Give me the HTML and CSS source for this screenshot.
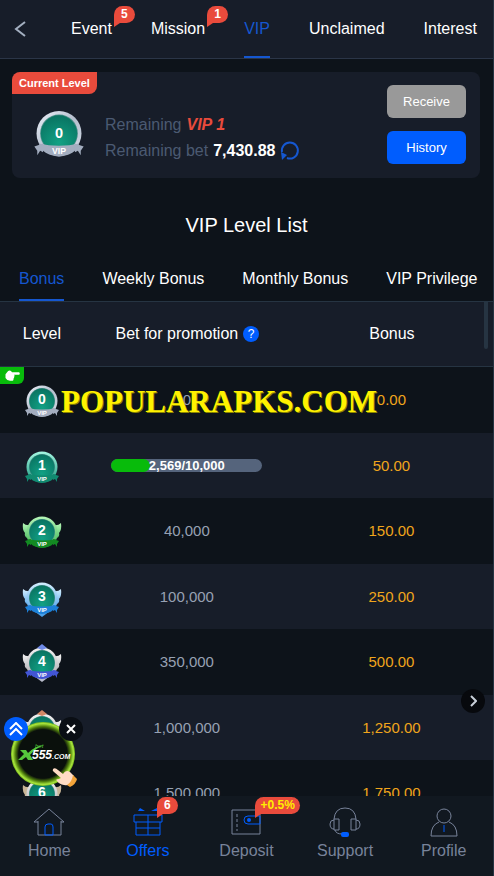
FILE: index.html
```html
<!DOCTYPE html>
<html lang="en">
<head>
  <meta charset="UTF-8" />
  <meta name="viewport" content="width=device-width, initial-scale=1.0" />
  <title>VIP</title>
  <link rel="stylesheet" href="styles.css">
</head>
<body>
  <!-- shared medal artwork -->
  <svg class="defs" width="0" height="0" aria-hidden="true">
    <defs>
      <linearGradient id="silver" x1="0" y1="0" x2="1" y2="1"><stop offset="0" stop-color="#eef2fa"/><stop offset=".5" stop-color="#b5bfce"/><stop offset="1" stop-color="#d5dbe6"/></linearGradient>
      <linearGradient id="mint" x1="0" y1="0" x2="0" y2="1"><stop offset="0" stop-color="#a5f8e2"/><stop offset="1" stop-color="#1c9a80"/></linearGradient>
      <linearGradient id="green" x1="0" y1="0" x2="0" y2="1"><stop offset="0" stop-color="#b6f7b8"/><stop offset="1" stop-color="#3db454"/></linearGradient>
      <linearGradient id="blue" x1="0" y1="0" x2="0" y2="1"><stop offset="0" stop-color="#d4efff"/><stop offset="1" stop-color="#4b9fe8"/></linearGradient>
      <linearGradient id="white" x1="0" y1="0" x2="0" y2="1"><stop offset="0" stop-color="#f4f4f4"/><stop offset="1" stop-color="#a9a9ae"/></linearGradient>
      <radialGradient id="gem" cx=".5" cy=".75" r=".8"><stop offset="0" stop-color="#12a184"/><stop offset="1" stop-color="#08705f"/></radialGradient>
      <radialGradient id="ring" cx=".5" cy=".5" r=".5"><stop offset=".76" stop-color="#0a100c"/><stop offset=".86" stop-color="#4f7d0d"/><stop offset=".95" stop-color="#a8e63c"/><stop offset="1" stop-color="#79b51e"/></radialGradient>
    </defs>
    <symbol id="disc" viewBox="0 0 40 40">
      <circle cx="20" cy="21" r="15.500"/>
      <circle cx="20" cy="21" r="13" fill="#4a8f88"/>
      <circle cx="20" cy="21" r="12.500" fill="url(#gem)"/>
    </symbol>
    <symbol id="ribbon" viewBox="0 0 40 40">
      <path d="M3 30 L9 28 V34 L7 33 L5 36 L5 33 Z M37 30 L31 28 V34 L33 33 L35 36 L35 33 Z"/>
      <path d="M6 28 Q20 31 34 28 L31 33 Q28 36 20 37 Q12 36 9 33 Z"/>
    </symbol>
    <symbol id="wings" viewBox="0 0 40 40">
      <path d="M1 12 Q4 15 9 14 L11 31 Q6 31 5 27 Q2 25 3 22 Q0 19 1 12 Z"/>
      <path d="M39 12 Q36 15 31 14 L29 31 Q34 31 35 27 Q38 25 37 22 Q40 19 39 12 Z"/>
    </symbol>
    <symbol id="hand" viewBox="0 0 24 20">
      <path d="M23 5 H12 Q10 1 6 3 L2 8 V14 Q4 18 9 18 H13 Q15 17 14 15 Q16 14 15 12 Q17 11 15 9 H23 Q25 7 23 5 Z"/>
    </symbol>
  </svg>

  <div class="app">
    <header class="topbar">
      <button class="back" aria-label="Back">
        <svg width="12" height="18" viewBox="0 0 12 18"><path d="M11 2 L2 9 L11 16"/></svg>
      </button>
      <nav class="tabs">
        <a href="#event">Event<span class="bubble">5</span></a>
        <a href="#mission">Mission<span class="bubble">1</span></a>
        <a href="#vip" class="active">VIP</a>
        <a href="#unclaimed">Unclaimed</a>
        <a href="#interest">Interest</a>
      </nav>
    </header>

    <main>
      <section class="card">
        <span class="ribbon-label">Current Level</span>
        <svg class="medal large" viewBox="0 0 40 40">
          <use href="#disc" fill="url(#silver)"/><use href="#ribbon" fill="#a3adbf"/>
          <text x="20" y="24" class="num">0</text><text x="20" y="35" class="vip">VIP</text>
        </svg>
        <div class="remaining">
          <p>Remaining <em>VIP 1</em></p>
          <p>Remaining bet <strong>7,430.88</strong>
            <button class="refresh" aria-label="Refresh">
              <svg width="20" height="20" viewBox="0 0 20 20"><path d="M2 11 A8 8 0 1 1 7 17"/><path class="tip" d="M1 11 L7 14 L2 19 Z"/></svg>
            </button>
          </p>
        </div>
        <div class="actions">
          <button class="btn muted">Receive</button>
          <button class="btn">History</button>
        </div>
      </section>

      <h1>VIP Level List</h1>

      <nav class="tabs level-tabs">
        <a href="#bonus" class="active">Bonus</a>
        <a href="#weekly">Weekly Bonus</a>
        <a href="#monthly">Monthly Bonus</a>
        <a href="#privilege">VIP Privilege</a>
      </nav>

      <div class="list">
        <table>
          <thead>
            <tr>
              <th class="level">Level</th>
              <th class="bet"><span>Bet for promotion <button class="help" aria-label="Help">?</button></span></th>
              <th>Bonus</th>
            </tr>
          </thead>
          <tbody>
            <tr>
              <td>
                <span class="pointer"><svg width="16" height="13"><use href="#hand"/></svg></span>
                <svg class="medal" viewBox="0 0 40 40">
                  <use href="#disc" fill="url(#silver)"/><use href="#ribbon" fill="#a3adbf"/>
                  <text x="20" y="24" class="num">0</text><text x="20" y="35" class="vip">VIP</text>
                </svg>
              </td>
              <td>0</td>
              <td>0.00</td>
            </tr>
            <tr>
              <td>
                <svg class="medal" viewBox="0 0 40 40">
                  <use href="#disc" fill="url(#mint)"/><use href="#ribbon" fill="#118a70"/>
                  <text x="20" y="24" class="num">1</text><text x="20" y="35" class="vip">VIP</text>
                </svg>
              </td>
              <td><div class="progress"><div class="fill" style="width: 25.69%"></div><span>2,569/10,000</span></div></td>
              <td>50.00</td>
            </tr>
            <tr>
              <td>
                <svg class="medal" viewBox="0 0 40 40">
                  <use href="#wings" fill="url(#green)"/><use href="#disc" fill="url(#green)"/><use href="#ribbon" fill="#138a22"/>
                  <text x="20" y="24" class="num">2</text><text x="20" y="35" class="vip">VIP</text>
                </svg>
              </td>
              <td>40,000</td>
              <td>150.00</td>
            </tr>
            <tr>
              <td>
                <svg class="medal" viewBox="0 0 40 40">
                  <path d="M12 34 L20 40 L28 34 Z" fill="#4b9fe8"/>
                  <use href="#wings" fill="url(#blue)"/><use href="#disc" fill="url(#blue)"/><use href="#ribbon" fill="#1d80d8"/>
                  <text x="20" y="24" class="num">3</text><text x="20" y="35" class="vip">VIP</text>
                </svg>
              </td>
              <td>100,000</td>
              <td>250.00</td>
            </tr>
            <tr>
              <td>
                <svg class="medal" viewBox="0 0 40 40">
                  <path d="M12 34 L20 40 L28 34 Z" fill="#b9bccb"/>
                  <use href="#wings" fill="url(#white)"/><use href="#disc" fill="url(#white)"/><use href="#ribbon" fill="#4255d4"/>
                  <path d="M15 6 L20 2 L25 6 L20 8 Z" fill="#6f8be8"/>
                  <text x="20" y="24" class="num">4</text><text x="20" y="35" class="vip">VIP</text>
                </svg>
              </td>
              <td>350,000</td>
              <td>500.00</td>
            </tr>
            <tr>
              <td>
                <svg class="medal" viewBox="0 0 40 40">
                  <use href="#wings" fill="url(#white)"/><use href="#disc" fill="url(#white)"/><use href="#ribbon" fill="#b0673c"/>
                  <path d="M15 6 L20 2 L25 6 L20 8 Z" fill="#d38866"/>
                </svg>
              </td>
              <td>1,000,000</td>
              <td>1,250.00</td>
            </tr>
            <tr>
              <td>
                <svg class="medal" viewBox="0 0 40 40">
                  <use href="#wings" fill="#c9b596"/><use href="#disc" fill="url(#white)"/><use href="#ribbon" fill="#b0673c"/>
                  <text x="20" y="24" class="num">6</text>
                </svg>
              </td>
              <td>1,500,000</td>
              <td>1,750.00</td>
            </tr>
          </tbody>
        </table>
        <div class="thumb"></div>
        <div class="watermark">POPULARAPKS.COM</div>
      </div>
    </main>

    <button class="next" aria-label="Next">
      <svg width="8" height="12" viewBox="0 0 8 12"><path d="M2 1 L7 6 L2 11"/></svg>
    </button>

    <div class="promo">
      <svg width="66" height="66" viewBox="0 0 66 66">
        <circle cx="33" cy="33" r="32" fill="url(#ring)"/>
        <path d="M10 29 H16 L18 32 Q25 25 34 24 Q26 27 20 34 L23 39 H18 L16 36 L12 39 H8 L14 33 Z" fill="#55c83c"/>
        <text x="22" y="38" class="brand">555<tspan class="dotcom">.COM</tspan></text>
        <text x="25" y="27" class="bet-word">bet</text>
      </svg>
      <svg class="tap" width="26" height="22" viewBox="0 0 26 22">
        <path d="M1 2 Q3 0 6 3 L11 7 Q14 2 18 5 L22 9 L21 16 Q17 19 12 18 Q7 17 5 14 Q3 12 7 12 L9 11 L2 5 Q0 4 1 2 Z" fill="#ffdcc4"/>
        <path d="M21 8 L25 12 Q24 17 18 20 L15 18 Q20 15 21 8 Z" fill="#f2a43a"/>
      </svg>
      <button class="dot expand" aria-label="Expand">
        <svg width="14" height="14" viewBox="0 0 14 14"><path d="M1 7 L7 1 L13 7 M1 13 L7 7 L13 13"/></svg>
      </button>
      <button class="dot close" aria-label="Close">
        <svg width="10" height="10" viewBox="0 0 10 10"><path d="M1 1 L9 9 M9 1 L1 9"/></svg>
      </button>
    </div>

    <nav class="bottombar">
      <a href="#home">
        <svg width="32" height="30" viewBox="0 0 32 30"><path d="M5 14 V28 H28 V14 M1 15 L16 2 L31 15 H28 M1 15 H5"/><path class="accent" d="M12 28 V20 Q12 17 15 17 H18 Q20 17 20 20 V28 Z"/></svg>
        Home
      </a>
      <a href="#offers" class="active">
        <svg width="32" height="30" viewBox="0 0 32 30"><path d="M2 8 H30 V15 H2 Z M4 15 V28 H28 V15 M4 21 H28 M16 8 V28"/><path class="solid" d="M6 4 L8 1 L13 4 Z M19 4 L25 1 V4 Z"/></svg>
        Offers
        <span class="bubble">6</span>
      </a>
      <a href="#deposit">
        <svg width="32" height="30" viewBox="0 0 32 30"><path d="M2 3 H30 V27 H2 Z"/><path d="M7 7 V24" stroke-dasharray="3 2"/><path class="accent" d="M30 9 H18 Q14 9 14 13 Q14 17 18 17 H30 Z"/><circle class="solid" cx="19" cy="13" r="2"/></svg>
        Deposit
        <span class="bubble wide">+0.5%</span>
      </a>
      <a href="#support">
        <svg width="32" height="30" viewBox="0 0 32 30"><path d="M5 12 Q6 1 16 1 Q26 1 27 12 M5 12 H10 V23 H5 Z M22 12 H27 V23 H22 Z M5 13 Q1 13 1 17 Q1 22 5 22 M27 13 Q31 13 31 17 Q31 22 27 22 M6 23 Q7 27 13 27"/><rect class="solid" x="12" y="25" width="8" height="5" rx="2"/></svg>
        Support
      </a>
      <a href="#profile">
        <svg width="32" height="30" viewBox="0 0 32 30"><circle cx="16" cy="9" r="7"/><path d="M11 15 Q3 18 3 29 H29 Q29 18 21 15"/><path class="accent" d="M16 18 V25"/></svg>
        Profile
      </a>
    </nav>
  </div>
</body>
</html>
```
FILE: styles.css
```css
:root {
  --background: #0d131a;
  --panel: #171d29;
  --line: #263442;
  --primary: #1557d0;
  --accent: #005dfe;
  --danger: #e94b3c;
  --muted: #4b5a72;
  --text: #ffffff;
}

* {
  box-sizing: border-box;
}

body {
  margin: 0;
  font-family: "Liberation Sans", Arial, sans-serif;
  font-size: 16px;
  color: var(--text);
  background: var(--background);
}

a {
  color: inherit;
  text-decoration: none;
}

button {
  padding: 0;
  border: 0;
  font-family: inherit;
  color: inherit;
  background: none;
  cursor: pointer;
}

svg {
  display: block;
  fill: none;
}

.defs {
  position: absolute;
}

.app {
  position: relative;
  display: flex;
  flex-direction: column;
  height: 100vh;
  overflow: hidden;
  border-right: 1px solid var(--line);
}

/* top bar */
.topbar {
  display: flex;
  flex: none;
  height: 59px;
  background: var(--panel);
  border-bottom: 1px solid #2b3547;
}

.back {
  width: 71px;
  padding-left: 14px;
}

.back svg {
  stroke: #a3afc0;
  stroke-width: 2;
}

.tabs {
  display: flex;
  gap: 39px;
  white-space: nowrap;
}

.tabs a {
  position: relative;
  display: flex;
  align-items: center;
}

.tabs .active {
  color: var(--primary);
}

.tabs .active::after {
  content: "";
  position: absolute;
  left: 0;
  right: 0;
  bottom: 0;
  height: 2px;
  background: var(--primary);
}

.bubble {
  position: absolute;
  left: 100%;
  top: 6px;
  min-width: 21px;
  height: 17px;
  margin-left: 2px;
  padding: 0 5px;
  border-radius: 9px 9px 9px 0;
  font-size: 12px;
  font-weight: bold;
  line-height: 17px;
  text-align: center;
  background: var(--danger);
}

.bubble::after {
  content: "";
  position: absolute;
  left: 0;
  top: 100%;
  border-top: 4px solid var(--danger);
  border-right: 6px solid transparent;
}

/* level card */
main {
  flex: 1;
  display: flex;
  flex-direction: column;
  min-height: 0;
  overflow: hidden;
}

.card {
  position: relative;
  display: flex;
  align-items: center;
  flex: none;
  height: 106px;
  margin: 13px 13px 0 12px;
  padding: 0 14px 0 18px;
  border-radius: 8px;
  background: var(--panel);
}

.ribbon-label {
  position: absolute;
  left: 0;
  top: 0;
  padding: 0 7px;
  border-radius: 8px 0;
  font-size: 11px;
  font-weight: bold;
  line-height: 22px;
  background: var(--danger);
}

.remaining {
  flex: 1;
  margin-left: 17px;
  padding-top: 26px;
  color: var(--muted);
}

.remaining p {
  display: flex;
  align-items: center;
  gap: 5px;
  margin: 0;
  line-height: 26px;
  white-space: nowrap;
}

.remaining em {
  font-weight: bold;
  color: var(--danger);
}

.remaining strong {
  color: var(--text);
}

.refresh svg {
  stroke: var(--primary);
  stroke-width: 2;
}

.refresh .tip {
  fill: var(--primary);
  stroke: none;
}

.actions {
  display: flex;
  flex-direction: column;
  gap: 13px;
  padding-bottom: 2px;
}

.btn {
  width: 79px;
  height: 33px;
  border-radius: 6px;
  font-size: 13px;
  background: var(--accent);
}

.btn.muted {
  background: #999999;
}

h1 {
  margin: 34px 0 20px;
  font-size: 20px;
  font-weight: normal;
  line-height: 26px;
  text-align: center;
}

.level-tabs {
  flex: none;
  gap: 38px;
  height: 44px;
  padding: 0 19px;
  border-bottom: 1px solid var(--line);
}

.level-tabs a {
  padding-bottom: 2px;
}

/* level table */
.list {
  position: relative;
  flex: 1;
  min-height: 0;
  overflow: hidden;
}

table {
  width: 100%;
  border-collapse: separate;
  border-spacing: 0;
  table-layout: fixed;
}

th {
  height: 65px;
  padding: 0;
  font-weight: normal;
  background: var(--panel);
  border-bottom: 1px solid var(--line);
}

th.level {
  width: 17%;
}

th.bet {
  width: 42%;
}

th.bet span {
  display: flex;
  align-items: center;
  justify-content: center;
  gap: 5px;
}

.help {
  width: 16px;
  height: 16px;
  border-radius: 50%;
  font-size: 12px;
  background: var(--accent);
}

td {
  position: relative;
  height: 66px;
  padding: 0 1px 1px 0;
  font-size: 15px;
  text-align: center;
  color: #97a1b3;
}

td:first-child {
  padding: 0;
}

tbody tr:nth-child(even) td {
  height: 65px;
  background: var(--panel);
}

td:last-child {
  color: #f0a51c;
}

.pointer {
  position: absolute;
  left: 0;
  top: 0;
  width: 24px;
  height: 17px;
  padding: 2px 4px;
  border-bottom-right-radius: 6px;
  background: #08bb0b;
}

.pointer svg {
  fill: #ffffff;
}

.medal {
  flex: none;
  width: 40px;
  height: 40px;
  margin: 0 auto;
}

.medal.large {
  width: 58px;
  height: 58px;
  margin: 14px 0 0;
}

.medal text {
  font-weight: bold;
  text-anchor: middle;
  fill: #ffffff;
}

.medal .num {
  font-size: 14px;
}

.medal .vip {
  font-size: 6px;
}

.medal.large .num {
  font-size: 10px;
}

.progress {
  position: relative;
  width: 151px;
  height: 13px;
  margin: 0 auto;
  border-radius: 7px;
  background: #55647c;
}

.fill {
  height: 100%;
  border-radius: 7px;
  background: #08bb0b;
}

.progress span {
  position: absolute;
  left: 0;
  right: 0;
  top: 0;
  font-size: 13px;
  font-weight: bold;
  line-height: 13px;
  color: #ffffff;
}

.thumb {
  position: absolute;
  right: 5px;
  top: 0;
  width: 4px;
  height: 47px;
  border-radius: 0 0 2px 2px;
  background: var(--line);
}

.watermark {
  position: absolute;
  left: 61px;
  top: 82px;
  font-family: "Liberation Serif", serif;
  font-size: 31px;
  font-weight: bold;
  line-height: 36px;
  color: #fff200;
  text-shadow: 1px 1px #8c8500;
}

/* floating controls */
.next {
  position: absolute;
  right: 8px;
  bottom: 163px;
  display: flex;
  align-items: center;
  justify-content: center;
  width: 24px;
  height: 24px;
  border-radius: 50%;
  background: #07090d;
}

.next svg {
  stroke: #c8ced8;
  stroke-width: 2;
}

.promo {
  position: absolute;
  left: 4px;
  bottom: 87px;
  width: 80px;
  height: 72px;
  padding: 4px 6px;
}

.promo .brand {
  font-size: 12px;
  font-weight: bold;
  font-style: italic;
  fill: #ffffff;
}

.promo .dotcom {
  font-size: 7px;
}

.promo .bet-word {
  font-size: 6px;
  font-style: italic;
  fill: #55c83c;
}

.tap {
  position: absolute;
  right: 6px;
  bottom: 0;
}

.dot {
  position: absolute;
  top: 0;
  display: flex;
  align-items: center;
  justify-content: center;
  width: 24px;
  height: 24px;
  border-radius: 50%;
  background: #0a0e14;
}

.dot svg {
  stroke: #ffffff;
  stroke-width: 2;
}

.expand {
  left: 0;
  background: var(--accent);
}

.close {
  right: 1px;
}

/* bottom bar */
.bottombar {
  display: flex;
  flex: none;
  height: 80px;
  background: #111820;
}

.bottombar a {
  position: relative;
  display: flex;
  flex: 1;
  flex-direction: column;
  align-items: center;
  gap: 4px;
  padding-top: 11px;
  line-height: 20px;
  color: #78839a;
}

.bottombar svg {
  stroke: currentColor;
  stroke-width: 1;
}

.bottombar .accent {
  stroke: var(--accent);
}

.bottombar .solid {
  fill: var(--accent);
  stroke: none;
}

.bottombar .active {
  color: var(--accent);
}

.bottombar .bubble {
  left: 50%;
  top: 1px;
  margin-left: 9px;
  color: #ffffff;
}

.bottombar .wide {
  color: #ffee00;
}
```
